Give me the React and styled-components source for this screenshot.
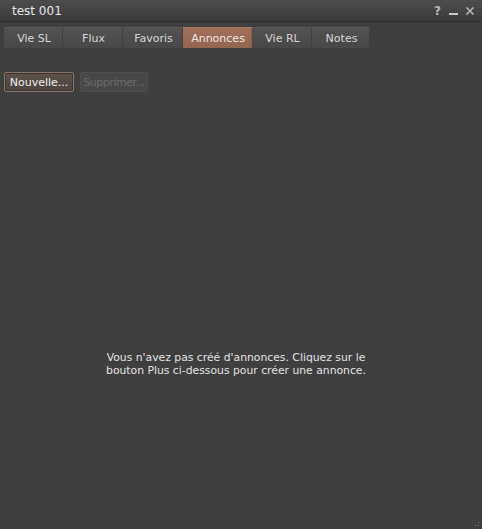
import styled, { createGlobalStyle } from "styled-components";

const GlobalStyle = createGlobalStyle`
  html, body {
    margin: 0;
    padding: 0;
    background: #3f3f3f;
  }
  body {
    font-family: "DejaVu Sans", "Liberation Sans", sans-serif;
  }
`;

const tabs = [
  { label: "Vie SL", width: 59 },
  { label: "Flux", width: 60 },
  { label: "Favoris", width: 60 },
  { label: "Annonces", width: 69, active: true },
  { label: "Vie RL", width: 60 },
  { label: "Notes", width: 58 },
];

export default function App() {
  return (
    <>
      <GlobalStyle />
      <Floater>
        <TitleBar>
          <Title>test 001</Title>
          <Controls>
            <Control>?</Control>
            <MinIcon />
            <svg width="10" height="10" viewBox="0 0 10 10">
              <path d="M1.5 1.5 L8.5 8.5 M8.5 1.5 L1.5 8.5" stroke="#b8b8b8" strokeWidth="1.6" />
            </svg>
          </Controls>
        </TitleBar>

        <TabBar>
          {tabs.map((t) => (
            <Tab key={t.label} $width={t.width} $active={t.active}>
              {t.label}
            </Tab>
          ))}
        </TabBar>

        <Toolbar>
          <Button $width={70}>Nouvelle...</Button>
          <Button $width={68} disabled>
            Supprimer...
          </Button>
        </Toolbar>

        <EmptyPanel>
          <Message>
            Vous n'avez pas créé d'annonces. Cliquez sur le
            <br />
            bouton Plus ci-dessous pour créer une annonce.
          </Message>
        </EmptyPanel>

        <Grip />
      </Floater>
    </>
  );
}

const Floater = styled.div`
  position: relative;
  width: 482px;
  height: 529px;
  background: #3f3f3f;
  display: flex;
  flex-direction: column;
  overflow: hidden;
`;

const TitleBar = styled.div`
  height: 21px;
  display: flex;
  align-items: center;
  justify-content: space-between;
  padding: 0 7px 0 12px;
  background: linear-gradient(#4c4c4c, #3b3b3b);
  border-bottom: 1px solid #2c2c2c;
`;

const Title = styled.span`
  font-size: 12px;
  color: #e6e6e6;
  padding-top: 1px;
`;

const Controls = styled.div`
  display: flex;
  align-items: center;
  gap: 7px;
  color: #b8b8b8;
`;

const Control = styled.span`
  font-size: 12px;
  font-weight: bold;
  color: #b8b8b8;
  width: 9px;
  text-align: center;
`;

const MinIcon = styled.span`
  display: block;
  width: 9px;
  height: 2px;
  margin-top: 6px;
  background: #c8c8c8;
`;

const TabBar = styled.div`
  display: flex;
  padding: 5px 4px 0;
`;

const Tab = styled.div`
  width: ${(p) => p.$width}px;
  height: 21px;
  box-sizing: border-box;
  display: flex;
  align-items: center;
  justify-content: center;
  font-size: 11px;
  padding-left: 2px;
  color: ${(p) => (p.$active ? "#f0e6e0" : "#d6d6d6")};
  background: ${(p) =>
    p.$active
      ? "linear-gradient(#a0705a, #946650)"
      : "linear-gradient(#525252, #484848)"};
  border-right: 1px solid ${(p) => (p.$active ? "#8a5e4a" : "#404040")};
  border-top: 1px solid ${(p) => (p.$active ? "#a87a64" : "#575757")};
`;

const Toolbar = styled.div`
  display: flex;
  gap: 6px;
  padding: 24px 4px 0;
`;

const Button = styled.button`
  width: ${(p) => p.$width}px;
  height: 20px;
  padding: 0;
  white-space: nowrap;
  text-align: center;
  font-family: "DejaVu Sans", "Liberation Sans", sans-serif;
  font-size: 11px;
  color: #ececec;
  background: linear-gradient(#5e524c, #4c4440);
  border: 1px solid #8a7266;
  border-radius: 2px;
  box-shadow: inset 0 0 0 1px #3e3632;

  &:disabled {
    color: #6a6a6a;
    letter-spacing: -0.45px;
    background: #474747;
    border-color: #4e4e4e;
    box-shadow: none;
  }
`;

const EmptyPanel = styled.div`
  flex: 1;
  display: flex;
  justify-content: center;
  padding: 259px 10px 0 0;
`;

const Message = styled.p`
  margin: 0;
  font-size: 10.8px;
  line-height: 13px;
  color: #e2e2e2;
  text-align: center;
`;

const Grip = styled.div`
  position: absolute;
  right: 1px;
  bottom: 1px;
  width: 10px;
  height: 10px;
  background-image: radial-gradient(#7a7a7a 0.8px, transparent 1px);
  background-size: 3px 3px;
  clip-path: polygon(100% 0, 100% 100%, 0 100%);
`;
